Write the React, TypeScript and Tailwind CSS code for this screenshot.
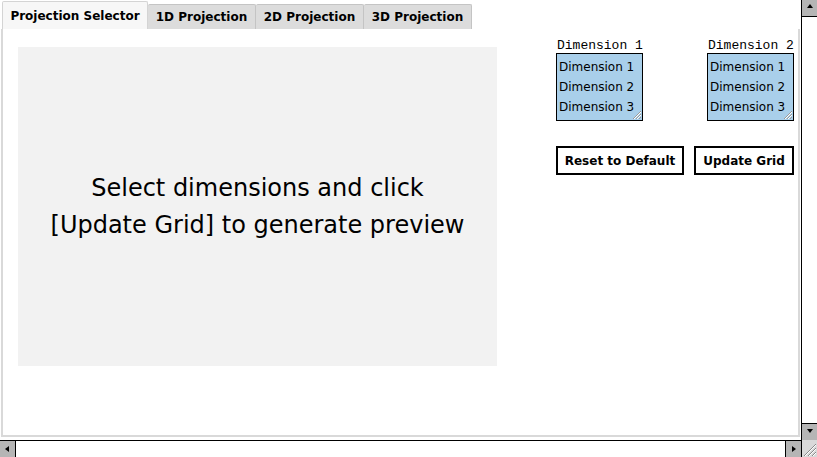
import React from "react";

const sans = { fontFamily: '"DejaVu Sans", Verdana, sans-serif' };
const mono = { fontFamily: '"Liberation Mono", "Courier New", monospace' };

function Grip() {
  return (
    <svg width="12" height="12" viewBox="0 0 12 12" className="absolute right-0 bottom-0">
      <path d="M11 3 L3 11 M11 6 L6 11 M11 9 L9 11" stroke="#9a9a9a" strokeWidth="1" />
      <path d="M11 4 L4 11 M11 7 L7 11" stroke="#ffffff" strokeWidth="1" />
    </svg>
  );
}

function ListBox() {
  return (
    <div className="relative w-[87px] h-[68px] border border-black bg-[#a9cfea] pt-[3px] pl-[2px] text-[12px] leading-[20px] text-black">
      <div>Dimension 1</div>
      <div>Dimension 2</div>
      <div>Dimension 3</div>
      <Grip />
    </div>
  );
}

function Arrow({ dir }: { dir: "up" | "down" | "left" | "right" }) {
  const pts = {
    up: "4,7 10,7 7,3",
    down: "4,4 10,4 7,8",
    left: "8,4 8,10 4,7",
    right: "5,4 5,10 9,7",
  }[dir];
  return (
    <svg width="14" height="14" viewBox="0 0 14 14">
      <polygon points={pts} fill="#000" />
    </svg>
  );
}

export default function App() {
  const tabs = ["1D Projection", "2D Projection", "3D Projection"];
  return (
    <div className="w-[817px] h-[457px] flex flex-col bg-white overflow-hidden" style={sans}>
      <div className="flex flex-1 min-h-0">
        <div className="flex-1 flex flex-col pl-[1px] pt-[1px] pr-[1px] pb-[3px]">
          <div className="flex items-end h-[28px] pl-[1px]">
            <div className="h-[28px] w-[146px] flex items-center justify-center bg-[#f7f7f7] border border-b-0 border-[#d4d4d4] rounded-t-[2px] text-[12px] font-bold text-black">
              Projection Selector
            </div>
            {tabs.map((t) => (
              <div
                key={t}
                className="h-[25px] w-[108px] flex items-center justify-center bg-[#dcdcdc] border border-b-0 border-l-0 border-[#c4c4c4] rounded-t-[2px] text-[12px] font-bold text-black"
              >
                {t}
              </div>
            ))}
          </div>
          <div className="flex-1 border-2 border-t-0 border-[#d9d9d9] bg-white flex pl-[15px] pt-[18px]">
            <div className="w-[479px] h-[319px] bg-[#f2f2f2] flex items-center justify-center text-center text-[24px] leading-[37px] text-black">
              <div>
                Select dimensions and click
                <br />
                [Update Grid] to generate preview
              </div>
            </div>
            <div className="ml-[59px] -mt-[9px] flex flex-col">
              <div className="flex gap-[64px]">
                <div className="flex flex-col">
                  <div className="text-[13px] leading-[15px] text-black pl-[1px]" style={mono}>Dimension 1</div>
                  <ListBox />
                </div>
                <div className="flex flex-col">
                  <div className="text-[13px] leading-[15px] text-black pl-[1px]" style={mono}>Dimension 2</div>
                  <ListBox />
                </div>
              </div>
              <div className="flex gap-[10px] mt-[25px]">
                <div className="w-[128px] h-[29px] border-2 border-black flex items-center justify-center text-[12px] font-bold text-black">
                  Reset to Default
                </div>
                <div className="w-[100px] h-[29px] border-2 border-black flex items-center justify-center text-[12px] font-bold text-black">
                  Update Grid
                </div>
              </div>
            </div>
          </div>
        </div>
        <div className="w-[16px] flex flex-col border-l border-black bg-white">
          <div className="h-[17px] bg-[#b5b5b5] border-b border-black flex items-center justify-center">
            <Arrow dir="up" />
          </div>
          <div className="flex-1" />
          <div className="h-[17px] bg-[#b5b5b5] border-t border-black flex items-center justify-center">
            <Arrow dir="down" />
          </div>
        </div>
      </div>
      <div className="h-[17px] flex">
        <div className="flex-1 flex border-t border-black bg-white">
          <div className="w-[16px] bg-[#b5b5b5] border-r border-black flex items-center justify-center">
            <Arrow dir="left" />
          </div>
          <div className="flex-1" />
          <div className="w-[16px] bg-[#b5b5b5] border-l border-black flex items-center justify-center">
            <Arrow dir="right" />
          </div>
        </div>
        <div className="w-[16px] relative bg-[#d9d9d9] border-l border-black">
          <svg width="16" height="16" viewBox="0 0 16 16" className="absolute right-0 bottom-0">
            <path d="M15 3 L3 15 M15 7 L7 15 M15 11 L11 15" stroke="#8a8a8a" strokeWidth="1" />
            <path d="M15 4 L4 15 M15 8 L8 15 M15 12 L12 15" stroke="#ffffff" strokeWidth="1" />
          </svg>
        </div>
      </div>
    </div>
  );
}
